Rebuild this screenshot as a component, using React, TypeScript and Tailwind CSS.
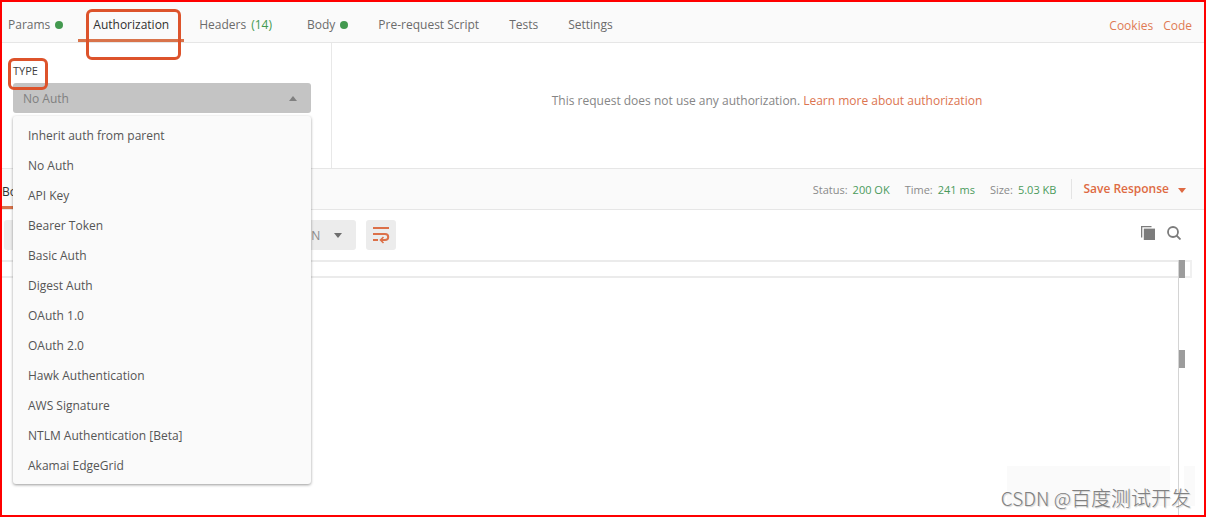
import { useState } from "react";

const authTypes = [
  "Inherit auth from parent",
  "No Auth",
  "API Key",
  "Bearer Token",
  "Basic Auth",
  "Digest Auth",
  "OAuth 1.0",
  "OAuth 2.0",
  "Hawk Authentication",
  "AWS Signature",
  "NTLM Authentication [Beta]",
  "Akamai EdgeGrid",
];

type TabInfo = { label: string; dot?: boolean; count?: number; marked?: boolean };

const tabs: TabInfo[] = [
  { label: "Params", dot: true },
  { label: "Authorization", marked: true },
  { label: "Headers", count: 14 },
  { label: "Body", dot: true },
  { label: "Pre-request Script" },
  { label: "Tests" },
  { label: "Settings" },
];

function Caret({ up = false, className }: { up?: boolean; className: string }) {
  return (
    <svg viewBox="0 0 8 5" width="8" height="5" className={className} aria-hidden="true">
      <path d={up ? "M0 5L4 0L8 5Z" : "M0 0L4 5L8 0Z"} fill="currentColor" />
    </svg>
  );
}

function RequestTabs() {
  const [active, setActive] = useState("Authorization");
  return (
    <nav className="flex h-[41px] items-stretch justify-between border-b border-[#e6e6e6] bg-[#fafafa]">
      <div className="flex">
        {tabs.map((tab) => (
          <button
            key={tab.label}
            type="button"
            onClick={() => setActive(tab.label)}
            className={`relative flex items-center gap-[5px] border-b-3 px-[15px] pt-2 first:pl-[6px] ${
              active === tab.label ? "border-[#d9734a] text-[#303030]" : "border-transparent text-[#6b6b6b]"
            }`}
          >
            {tab.label}
            {tab.dot && <span className="size-2 rounded-full bg-[#43994f]" />}
            {tab.count && <span className="pr-[5px] text-[#43994f]">({tab.count})</span>}
            {tab.marked && (
              <span className="pointer-events-none absolute top-[7px] right-[3px] left-2 z-10 h-[51px] rounded-md border-3 border-[#dd532b]" />
            )}
          </button>
        ))}
      </div>
      <div className="flex items-center gap-[10px] pt-2 pr-3 text-[#df7a54]">
        <a href="#cookies">Cookies</a>
        <a href="#code">Code</a>
      </div>
    </nav>
  );
}

function AuthPanel() {
  const [type, setType] = useState("No Auth");
  const [open, setOpen] = useState(true);
  return (
    <section className="flex h-[125px]">
      <div className="w-[330px] shrink-0 border-r border-[#e8e8e8] pt-5 pr-5 pl-[11px]">
        <div className="relative flex h-5 w-fit items-start">
          <label htmlFor="auth-type" className="text-[11px] leading-4 font-medium text-[#404040]">
            TYPE
          </label>
          <span className="pointer-events-none absolute -top-[5px] -right-[10px] -left-[5px] z-10 h-8 rounded-md border-3 border-[#dd532b]" />
        </div>
        <div className="relative">
          <select
            id="auth-type"
            value={type}
            onChange={(e) => setType(e.target.value)}
            onMouseDown={(e) => {
              e.preventDefault();
              setOpen(!open);
            }}
            className="h-[30px] w-full appearance-none rounded-[3px] bg-[#c4c4c4] px-[10px] pt-[2px] text-[#808080]"
          >
            {authTypes.map((t) => (
              <option key={t}>{t}</option>
            ))}
          </select>
          <Caret up className="pointer-events-none absolute top-[13px] right-[14px] text-[#808080]" />
          {open && (
            <ul className="absolute top-[33px] right-0 left-0 z-20 rounded-[3px] bg-[#fafafa] py-1 shadow-[0_1px_3px_rgba(0,0,0,0.4)]">
              {authTypes.map((t) => (
                <li key={t}>
                  <button
                    type="button"
                    onClick={() => {
                      setType(t);
                      setOpen(false);
                    }}
                    className="flex h-[30px] w-full items-center px-[15px] pt-[2px] text-[#555555] hover:bg-[#eeeeee]"
                  >
                    {t}
                  </button>
                </li>
              ))}
            </ul>
          )}
        </div>
      </div>
      <p className="flex grow items-center justify-center gap-[3px] pr-[2px] pb-[10px] text-[#868686]">
        This request does not use any authorization.
        <a href="#learn" className="text-[#dc7450]">
          Learn more about authorization
        </a>
      </p>
    </section>
  );
}

function Stat({ label, value }: { label: string; value: string }) {
  return (
    <span className="flex gap-[5px]">
      <span className="text-[#8a8a8a]">{label}:</span>
      <span className="text-[#4a9a5c]">{value}</span>
    </span>
  );
}

function ResponseBar() {
  return (
    <div className="flex h-[42px] items-stretch justify-between border-y border-[#e6e6e6] bg-[#fafafa]">
      <button type="button" className="border-b-3 border-[#d9734a] pt-2 text-[#303030]">
        Body
      </button>
      <div className="flex items-center pr-[18px]">
        <div className="flex gap-[15px] pt-[2px] text-[11px]">
          <Stat label="Status" value="200 OK" />
          <Stat label="Time" value="241 ms" />
          <Stat label="Size" value="5.03 KB" />
        </div>
        <button
          type="button"
          className="ml-[15px] flex h-5 items-center gap-[9px] border-l border-[#e4e4e4] pl-[11px] font-semibold text-[#de6a43]"
        >
          Save Response
          <Caret className="mt-[2px]" />
        </button>
      </div>
    </div>
  );
}

function ResponseToolbar() {
  return (
    <div className="flex h-[50px] items-center justify-between pr-[23px] pl-[2px]">
      <div className="flex items-center gap-[10px]">
        <div className="flex h-[30px] w-[252px] items-center rounded-[3px] bg-[#ececec]" />
        <div className="relative">
          <select
            aria-label="Format"
            defaultValue="JSON"
            className="h-[30px] w-[90px] appearance-none rounded-[3px] bg-[#ececec] pt-[2px] pl-[26px] text-[#8a8a8a]"
          >
            <option>JSON</option>
            <option>XML</option>
          </select>
          <Caret className="pointer-events-none absolute top-[13px] right-[14px] text-[#6e6e6e]" />
        </div>
        <button
          type="button"
          aria-label="Wrap lines"
          className="flex size-[30px] items-center justify-center rounded-[3px] bg-[#ececec] text-[#dc7048]"
        >
          <svg viewBox="0 0 18 18" width="18" height="18" fill="none" stroke="currentColor" strokeWidth="2">
            <path d="M1 2H17M1 8H13C17.3 8 17.3 14 13 14H9M1 14H6" />
            <path d="M11.5 11L8.5 14L11.5 17" strokeWidth="1.6" />
          </svg>
        </button>
      </div>
      <div className="flex items-center gap-3 pb-1 text-[#7c7c7c]">
        <button type="button" aria-label="Copy">
          <svg viewBox="0 0 14 14" width="14" height="14" fill="currentColor">
            <path d="M0 0H10.5V1.3H1.3V11.5H0Z" />
            <path d="M2.8 2.6H14V14H2.8Z" />
          </svg>
        </button>
        <button type="button" aria-label="Search">
          <svg viewBox="0 0 14 14" width="14" height="14" fill="none" stroke="currentColor" strokeWidth="1.8">
            <circle cx="6" cy="6" r="5" />
            <path d="M9.5 9.5L13.5 13.5" />
          </svg>
        </button>
      </div>
    </div>
  );
}

function ResponseEditor() {
  return (
    <div className="relative flex grow pr-3">
      <div className="h-[18px] grow border-y-2 border-[#ebebeb]" />
      <div className="flex w-[7px] flex-col gap-[72px] border-l border-[#d4d4d4]">
        <span className="h-[18px] bg-[#9c9c9c]" />
        <span className="h-[18px] bg-[#9c9c9c]" />
      </div>
      <div className="h-[18px] w-[7px] border-2 border-l-0 border-[#f0f0f0]" />
      <div className="absolute right-[34px] bottom-[9px] h-10 w-[163px] bg-[#fafafa]" />
      <div className="absolute right-[9px] bottom-[9px] h-10 w-[11px] bg-[#fafafa]" />
      <span className="absolute right-[13px] bottom-[3px] text-[20px] leading-7 font-light text-[#808080] [font-family:'Noto_Sans_CJK_SC',sans-serif] [text-shadow:1px_1px_1px_#d0d0d0]">
        <span className="text-[19px]">CSDN @</span>
        百度测试开发
      </span>
    </div>
  );
}

export default function App() {
  return (
    <main className="flex min-h-screen flex-col border-2 border-[#ff0000] bg-white text-[12px] leading-4 [font-family:'Open_Sans',sans-serif]">
      <RequestTabs />
      <AuthPanel />
      <ResponseBar />
      <ResponseToolbar />
      <ResponseEditor />
    </main>
  );
}
